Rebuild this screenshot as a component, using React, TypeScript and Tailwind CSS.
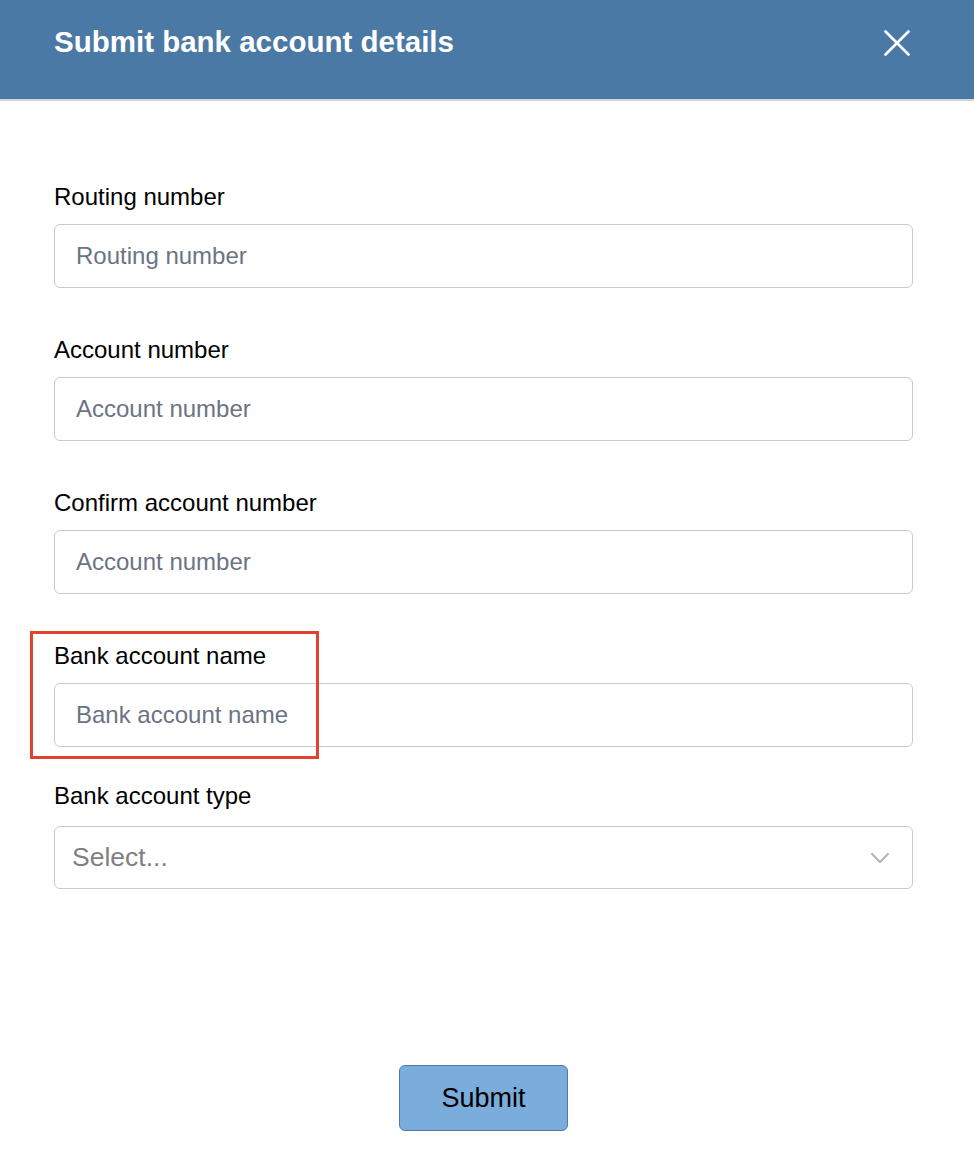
import React from 'react';

const font = { fontFamily: '"Liberation Sans", Arial, sans-serif' };

interface FieldProps {
  label: string;
  placeholder: string;
  highlighted?: boolean;
}

const TextField: React.FC<FieldProps> = ({ label, placeholder, highlighted }) => (
  <div className="relative">
    {highlighted && (
      <div className="absolute left-[-24px] top-[-11px] w-[289px] h-[128px] border-[3px] border-[#e0432b] pointer-events-none" />
    )}
    <label className="block text-[24px] leading-[28px] text-black mb-[13px]">{label}</label>
    <input
      type="text"
      placeholder={placeholder}
      className="w-full h-[64px] rounded-[6px] border border-[#c6cad0] bg-white px-[21px] text-[24px] text-black placeholder:text-[#6b7384] outline-none"
      style={font}
    />
  </div>
);

export default function App() {
  return (
    <div className="w-[974px] min-h-[1170px] bg-white" style={font}>
      {/* header */}
      <div className="h-[101px] bg-[#4b79a6] border-b-2 border-[#d3d6da] flex items-start justify-between pl-[54px] pr-[64px] pt-[25px]">
        <h1 className="text-[29.5px] leading-[34px] font-bold text-white">Submit bank account details</h1>
        <button className="mt-[5px]" aria-label="Close">
          <svg width="26" height="26" viewBox="0 0 26 26" fill="none" stroke="white" strokeWidth="2.6" strokeLinecap="round">
            <path d="M1.5 1.5 L24.5 24.5 M24.5 1.5 L1.5 24.5" />
          </svg>
        </button>
      </div>

      <main className="pl-[54px] pr-[61px] pt-[82px]">
        <div className="flex flex-col gap-[48px]">
          <TextField label="Routing number" placeholder="Routing number" />
          <TextField label="Account number" placeholder="Account number" />
          <TextField label="Confirm account number" placeholder="Account number" />
          <TextField label="Bank account name" placeholder="Bank account name" highlighted />
        </div>

        <div className="mt-[35px]">
          <label className="block text-[24px] leading-[28px] text-black mb-[16px]">Bank account type</label>
          <div className="h-[63px] rounded-[6px] border border-[#c6cad0] flex items-center justify-between pl-[17px] pr-[22px]">
            <span className="text-[26.5px] text-[#808080]">Select...</span>
            <svg width="20" height="12" viewBox="0 0 20 12" fill="none" stroke="#b5b5b5" strokeWidth="2.2" strokeLinecap="round" strokeLinejoin="round">
              <path d="M2 2 L10 10 L18 2" />
            </svg>
          </div>
        </div>

        <div className="flex justify-center mt-[176px]">
          <button className="w-[169px] h-[66px] rounded-[6px] bg-[#7aacdc] border border-[#4f7aa8] text-[27px] text-black">
            Submit
          </button>
        </div>
      </main>
    </div>
  );
}
